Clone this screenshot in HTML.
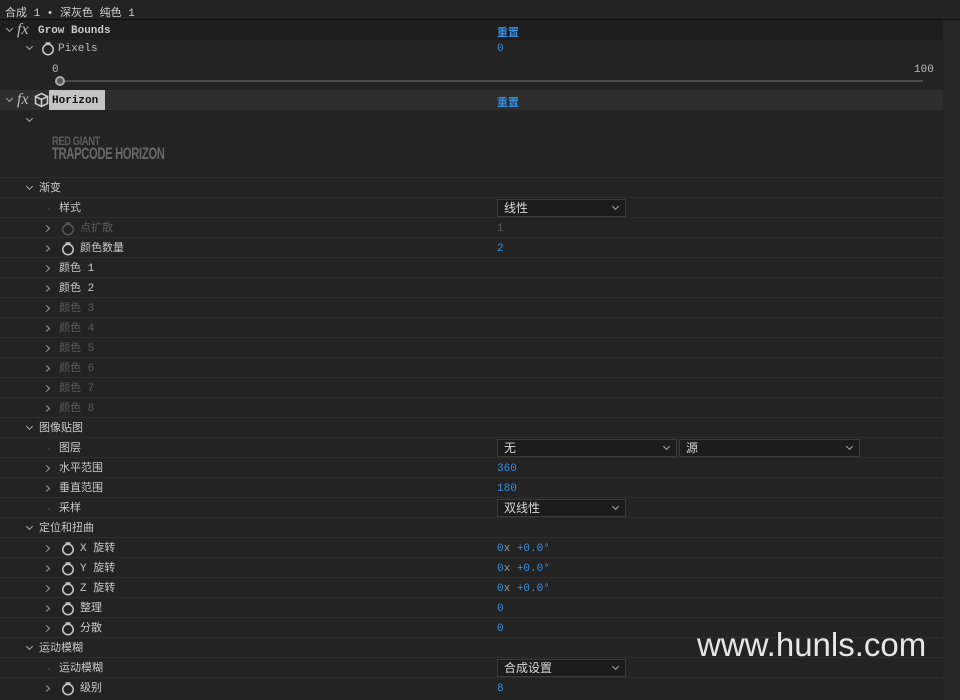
<!DOCTYPE html>
<html><head><meta charset="utf-8"><style>
*{margin:0;padding:0;box-sizing:border-box}
body{width:960px;height:700px;background:#232323;position:relative;overflow:hidden;font-family:"Liberation Mono","Noto Sans CJK SC",monospace;font-size:11px;color:#c8c8c8}
.a{position:absolute;white-space:nowrap}
.r{position:absolute;left:0;width:943px;height:20px;border-top:1px solid #2d2d2d}
.t{position:absolute;line-height:20px;top:1px;white-space:nowrap}
.b{color:#3a8ee0}
.d{color:#5a5a5a}
.dd{position:absolute;height:18px;top:1px;background:#1c1c1c;border:1px solid #3a3a3a;color:#d8d8d8;font-family:"Liberation Sans","Noto Sans CJK SC",sans-serif;font-size:12px;line-height:16px;padding-left:6px}
.dd:after{content:"";position:absolute;right:7px;top:4px;width:4px;height:4px;border-right:1px solid #aaa;border-bottom:1px solid #aaa;transform:rotate(45deg)}
.cv{position:absolute;width:5px;height:5px;border-right:1px solid #aaa;border-bottom:1px solid #aaa;transform:rotate(45deg)}
.cr{position:absolute;width:5px;height:5px;border-right:1px solid #999;border-bottom:1px solid #999;transform:rotate(-45deg)}
.sw{position:absolute;width:14px;height:15px}
.dot{position:absolute;width:2px;height:2px;background:#3a3a3a}
</style></head><body>
<svg width="0" height="0" style="position:absolute"><defs><g id="s"><circle cx="7" cy="8.5" r="5.2" fill="none" stroke="#c8c8c8" stroke-width="1.5"/><path d="M4.5 2h5M7 2v1.5" stroke="#c8c8c8" stroke-width="1.4"/></g><g id="sd"><circle cx="7" cy="8.5" r="5.2" fill="none" stroke="#555" stroke-width="1.5"/><path d="M4.5 2h5M7 2v1.5" stroke="#555" stroke-width="1.4"/></g></defs></svg>
<div class="a" style="left:0;top:0;width:960px;height:20px;border-bottom:1px solid #0e0e0e;background:#232323"></div>
<div class="a" style="left:5px;top:4px;font-family:'Liberation Mono','Noto Sans CJK SC',monospace;font-size:11px;color:#d0d0d0">合成 1 • 深灰色 纯色 1</div>
<div class="a" style="left:943px;top:20px;width:17px;height:680px;background:#262626"></div>
<!-- Grow bounds -->
<div class="a" style="left:0;top:20px;width:943px;height:20px;background:#1e1e1e"></div>
<div class="cv" style="left:7px;top:26px"></div>
<div class="a" style="left:17px;top:21px;font-family:'Liberation Serif',serif;font-style:italic;font-size:16px;color:#bbb">fx</div>
<div class="a" style="left:38px;top:25px;font-weight:bold;color:#c8c8c8;font-family:'Liberation Mono',monospace">Grow Bounds</div>
<div class="a b" style="left:497px;top:24px;font-family:'Noto Sans CJK SC',sans-serif;font-weight:bold">重置</div>
<div class="cv" style="left:27px;top:44px"></div>
<svg class="sw" style="left:41px;top:41px"><use href="#s"/></svg>
<div class="a" style="left:58px;top:43px;color:#bbb">Pixels</div>
<div class="a b" style="left:497px;top:43px">0</div>
<div class="a" style="left:52px;top:64px;color:#bbb">0</div>
<div class="a" style="left:914px;top:64px;color:#bbb">100</div>
<div class="a" style="left:60px;top:80px;width:863px;height:2px;background:#4a4a4a"></div>
<div class="a" style="left:55px;top:76px;width:10px;height:10px;border-radius:50%;background:#555;border:2px solid #aaa"></div>
<!-- Horizon -->
<div class="a" style="left:0;top:90px;width:943px;height:20px;background:#2e2e2e"></div>
<div class="cv" style="left:7px;top:96px"></div>
<div class="a" style="left:17px;top:91px;font-family:'Liberation Serif',serif;font-style:italic;font-size:16px;color:#bbb">fx</div>
<svg class="a" style="left:34px;top:92px" width="15" height="16"><path d="M7.5 1.5L13.5 4.5V11.5L7.5 14.5L1.5 11.5V4.5Z M1.5 4.5L7.5 7.5L13.5 4.5 M7.5 7.5V14.5" fill="none" stroke="#c8c8c8" stroke-width="1.6"/></svg>
<div class="a" style="left:49px;top:90px;width:56px;height:20px;background:#c4c4c4"></div>
<div class="a" style="left:52px;top:95px;font-weight:bold;color:#111;font-family:'Liberation Mono',monospace">Horizon</div>
<div class="a b" style="left:497px;top:94px;font-family:'Noto Sans CJK SC',sans-serif;font-weight:bold">重置</div>
<div class="cv" style="left:27px;top:116px"></div>
<div class="a" style="left:52px;top:134px;font-family:'Liberation Sans',sans-serif;font-weight:bold;font-size:12px;color:#5c5c5c;letter-spacing:-0.5px;transform:scaleX(0.78);transform-origin:left">RED GIANT</div>
<div class="a" style="left:52px;top:144px;font-family:'Liberation Sans',sans-serif;font-weight:bold;font-size:17px;color:#686868;letter-spacing:-0.5px;transform:scaleX(0.66);transform-origin:left">TRAPCODE HORIZON</div>

<div class="r" style="top:177px"><div class="cv" style="left:27px;top:6px"></div><div class="t" style="left:39px">渐变</div></div>
<div class="r" style="top:197px"><div class="dot" style="left:48px;top:10px"></div><div class="t" style="left:59px">样式</div><div class="dd" style="left:497px;width:129px">线性</div></div>
<div class="r" style="top:217px"><div class="cr" style="left:44px;top:8px"></div><svg class="sw" style="left:61px;top:3px"><use href="#sd"/></svg><div class="t d" style="left:80px">点扩散</div><div class="t d" style="left:497px">1</div></div>
<div class="r" style="top:237px"><div class="cr" style="left:44px;top:8px"></div><svg class="sw" style="left:61px;top:3px"><use href="#s"/></svg><div class="t" style="left:80px">颜色数量</div><div class="t b" style="left:497px">2</div></div>
<div class="r" style="top:257px"><div class="cr" style="left:44px;top:8px"></div><div class="t" style="left:59px">颜色 1</div></div>
<div class="r" style="top:277px"><div class="cr" style="left:44px;top:8px"></div><div class="t" style="left:59px">颜色 2</div></div>
<div class="r" style="top:297px"><div class="cr" style="left:44px;top:8px"></div><div class="t d" style="left:59px">颜色 3</div></div>
<div class="r" style="top:317px"><div class="cr" style="left:44px;top:8px"></div><div class="t d" style="left:59px">颜色 4</div></div>
<div class="r" style="top:337px"><div class="cr" style="left:44px;top:8px"></div><div class="t d" style="left:59px">颜色 5</div></div>
<div class="r" style="top:357px"><div class="cr" style="left:44px;top:8px"></div><div class="t d" style="left:59px">颜色 6</div></div>
<div class="r" style="top:377px"><div class="cr" style="left:44px;top:8px"></div><div class="t d" style="left:59px">颜色 7</div></div>
<div class="r" style="top:397px"><div class="cr" style="left:44px;top:8px"></div><div class="t d" style="left:59px">颜色 8</div></div>
<div class="r" style="top:417px"><div class="cv" style="left:27px;top:6px"></div><div class="t" style="left:39px">图像贴图</div></div>
<div class="r" style="top:437px"><div class="dot" style="left:48px;top:10px"></div><div class="t" style="left:59px">图层</div><div class="dd" style="left:497px;width:180px">无</div><div class="dd" style="left:679px;width:181px">源</div></div>
<div class="r" style="top:457px"><div class="cr" style="left:44px;top:8px"></div><div class="t" style="left:59px">水平范围</div><div class="t b" style="left:497px">360</div></div>
<div class="r" style="top:477px"><div class="cr" style="left:44px;top:8px"></div><div class="t" style="left:59px">垂直范围</div><div class="t b" style="left:497px">180</div></div>
<div class="r" style="top:497px"><div class="dot" style="left:48px;top:10px"></div><div class="t" style="left:59px">采样</div><div class="dd" style="left:497px;width:129px">双线性</div></div>
<div class="r" style="top:517px"><div class="cv" style="left:27px;top:6px"></div><div class="t" style="left:39px">定位和扭曲</div></div>
<div class="r" style="top:537px"><div class="cr" style="left:44px;top:8px"></div><svg class="sw" style="left:61px;top:3px"><use href="#s"/></svg><div class="t" style="left:80px">X 旋转</div><div class="t b" style="left:497px">0<span style="color:#999">x</span> +0.0°</div></div>
<div class="r" style="top:557px"><div class="cr" style="left:44px;top:8px"></div><svg class="sw" style="left:61px;top:3px"><use href="#s"/></svg><div class="t" style="left:80px">Y 旋转</div><div class="t b" style="left:497px">0<span style="color:#999">x</span> +0.0°</div></div>
<div class="r" style="top:577px"><div class="cr" style="left:44px;top:8px"></div><svg class="sw" style="left:61px;top:3px"><use href="#s"/></svg><div class="t" style="left:80px">Z 旋转</div><div class="t b" style="left:497px">0<span style="color:#999">x</span> +0.0°</div></div>
<div class="r" style="top:597px"><div class="cr" style="left:44px;top:8px"></div><svg class="sw" style="left:61px;top:3px"><use href="#s"/></svg><div class="t" style="left:80px">整理</div><div class="t b" style="left:497px">0</div></div>
<div class="r" style="top:617px"><div class="cr" style="left:44px;top:8px"></div><svg class="sw" style="left:61px;top:3px"><use href="#s"/></svg><div class="t" style="left:80px">分散</div><div class="t b" style="left:497px">0</div></div>
<div class="r" style="top:637px"><div class="cv" style="left:27px;top:6px"></div><div class="t" style="left:39px">运动模糊</div></div>
<div class="r" style="top:657px"><div class="dot" style="left:48px;top:10px"></div><div class="t" style="left:59px">运动模糊</div><div class="dd" style="left:497px;width:129px">合成设置</div></div>
<div class="r" style="top:677px"><div class="cr" style="left:44px;top:8px"></div><svg class="sw" style="left:61px;top:3px"><use href="#s"/></svg><div class="t" style="left:80px">级别</div><div class="t b" style="left:497px">8</div></div>

<div class="a" style="left:697px;top:626px;font-family:'Liberation Sans',sans-serif;font-size:33px;color:#e6e6e6">www.hunls.com</div>
</body></html>
